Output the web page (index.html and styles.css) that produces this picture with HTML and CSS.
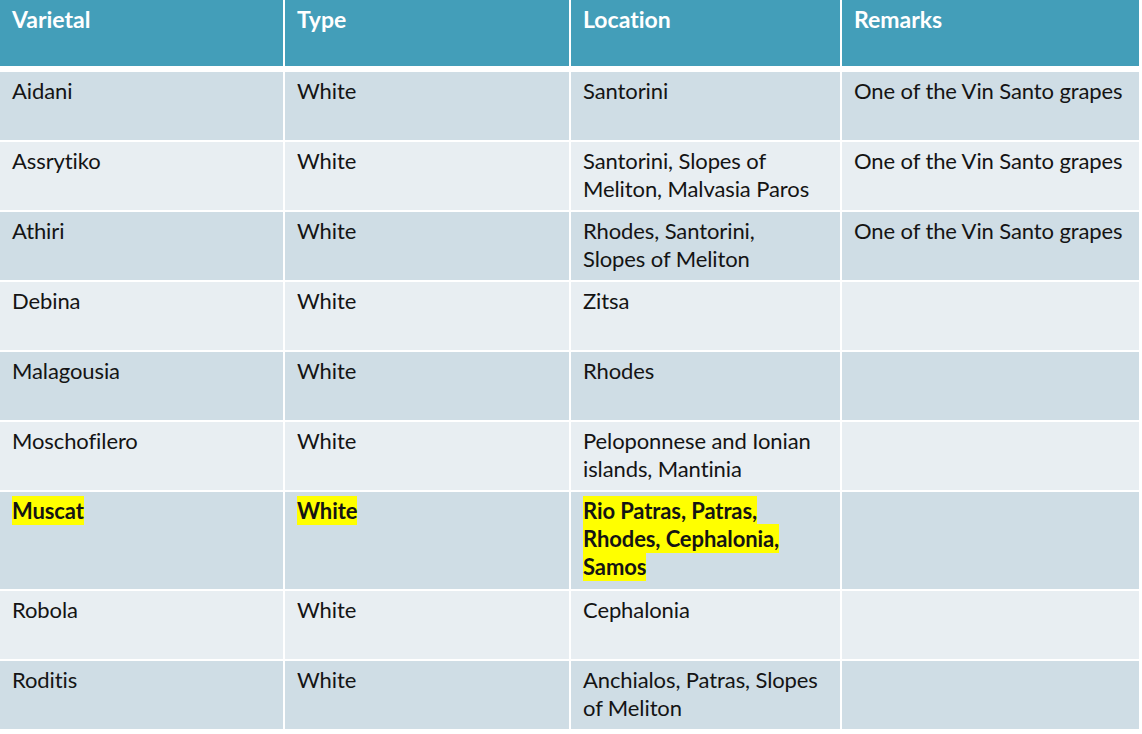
FILE: index.html
```html
<!DOCTYPE html>
<html lang="en">
<head>
<meta charset="utf-8">
<title>Greek Varietals</title>
<link rel="stylesheet" href="styles.css">
</head>
<body>
<table class="grapes">
  <colgroup>
    <col class="c-var">
    <col class="c-type">
    <col class="c-loc">
    <col class="c-rem">
  </colgroup>
  <thead>
    <tr>
      <th>Varietal</th>
      <th>Type</th>
      <th>Location</th>
      <th>Remarks</th>
    </tr>
  </thead>
  <tbody>
    <tr class="odd">
      <td>Aidani</td>
      <td>White</td>
      <td>Santorini</td>
      <td>One of the Vin Santo grapes</td>
    </tr>
    <tr class="even">
      <td>Assrytiko</td>
      <td>White</td>
      <td>Santorini, Slopes of Meliton, Malvasia Paros</td>
      <td>One of the Vin Santo grapes</td>
    </tr>
    <tr class="odd">
      <td>Athiri</td>
      <td>White</td>
      <td>Rhodes, Santorini, Slopes&nbsp;of Meliton</td>
      <td>One of the Vin Santo grapes</td>
    </tr>
    <tr class="even">
      <td>Debina</td>
      <td>White</td>
      <td>Zitsa</td>
      <td></td>
    </tr>
    <tr class="odd">
      <td>Malagousia</td>
      <td>White</td>
      <td>Rhodes</td>
      <td></td>
    </tr>
    <tr class="even">
      <td>Moschofilero</td>
      <td>White</td>
      <td>Peloponnese and Ionian islands, Mantinia</td>
      <td></td>
    </tr>
    <tr class="odd tall">
      <td><span class="hl">Muscat</span></td>
      <td><span class="hl">White</span></td>
      <td><span class="hl">Rio Patras, Patras, Rhodes, Cephalonia, Samos</span></td>
      <td></td>
    </tr>
    <tr class="even">
      <td>Robola</td>
      <td>White</td>
      <td>Cephalonia</td>
      <td></td>
    </tr>
    <tr class="odd">
      <td>Roditis</td>
      <td>White</td>
      <td>Anchialos, Patras, Slopes of Meliton</td>
      <td></td>
    </tr>
  </tbody>
</table>
</body>
</html>
```
FILE: styles.css
```css
html, body {
  margin: 0;
  padding: 0;
  background: #ffffff;
}

body {
  font-family: "Lato", "Open Sans", sans-serif;
  font-variant-ligatures: none;
  color: #141414;
}

.grapes {
  table-layout: fixed;
  border-collapse: separate;
  border-spacing: 0;
  width: 1139px;
}

.c-var { width: 285px; }
.c-type { width: 286px; }
.c-loc { width: 271px; }
.c-rem { width: 297px; }

.grapes th,
.grapes td {
  box-sizing: border-box;
  text-align: left;
  vertical-align: top;
  border-right: 2px solid #ffffff;
  border-bottom: 2px solid #ffffff;
  padding: 5px 12px 0 12px;
  font-size: 22px;
  letter-spacing: -0.1px;
  line-height: 28px;
}

.grapes th:last-child,
.grapes td:last-child {
  border-right: 0;
}

.grapes th {
  background: #439eb9;
  color: #ffffff;
  font-weight: 700;
  height: 72px;
  border-bottom-width: 6px;
  padding-top: 5px;
  font-size: 23px;
  letter-spacing: 0;
}

.grapes td {
  height: 70px;
  font-weight: 400;
}

.grapes tr.odd td { background: #cfdde5; }
.grapes tr.even td { background: #e8eef2; }

.grapes tr.tall td {
  height: 99px;
}

.hl {
  background: #ffff00;
  font-weight: 700;
  padding: 1px 0;
}
```
